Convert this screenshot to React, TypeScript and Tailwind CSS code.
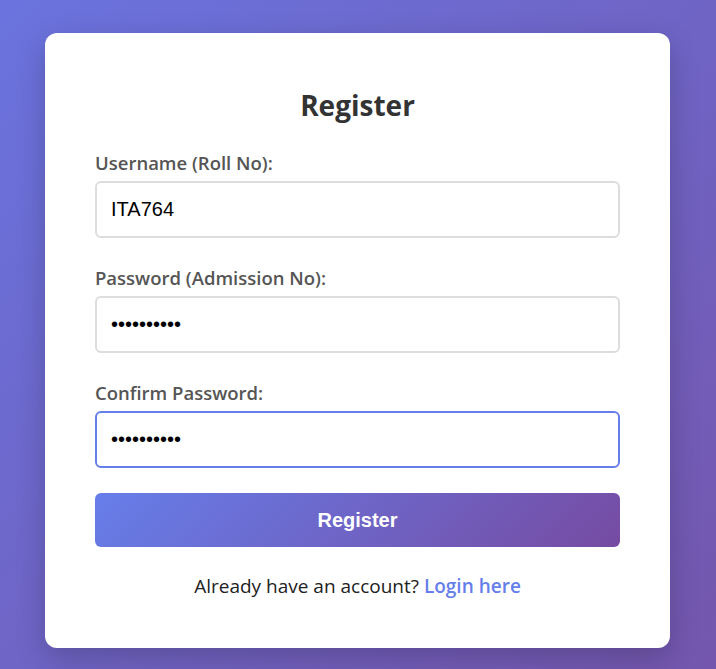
export default function App() {
    const sans = "font-['Open_Sans','Noto_Sans',sans-serif]"
    const arial = "font-['Liberation_Sans',Arial,sans-serif]"

    return <div className={`min-h-[669px] bg-[linear-gradient(135deg,#6a73de_0%,#7456ad_100%)] pt-[33px] pb-[21px] ${sans}`}>
        <div className="w-[625px] ml-[45px] bg-white rounded-[12px] shadow-[0_10px_30px_rgba(0,0,0,0.2)] px-[50px] pt-[50px] pb-[48px]">
            <h2 className="text-center text-[28px] font-bold text-[#333] leading-[44px] mb-[23px]">
                Register
            </h2>

            <form onSubmit={(ev) => ev.preventDefault()}>
                <div className="mb-[27px]">
                    <label className="block text-[18.5px] font-semibold text-[#555] leading-[26px] mb-[5px]">
                        Username (Roll No):
                    </label>
                    <input
                        type="text"
                        defaultValue="ITA764"
                        className={`w-full h-[57px] px-[14px] rounded-[6px] border-2 border-[#ddd] text-[20px] text-black outline-none ${arial}`}
                    />
                </div>

                <div className="mb-[27px]">
                    <label className="block text-[18.5px] font-semibold text-[#555] leading-[26px] mb-[5px]">
                        Password (Admission No):
                    </label>
                    <input
                        type="password"
                        defaultValue="ita764pass"
                        className={`w-full h-[57px] px-[14px] rounded-[6px] border-2 border-[#ddd] text-[20px] text-black outline-none ${arial}`}
                    />
                </div>

                <div className="mb-[25px]">
                    <label className="block text-[18.5px] font-semibold text-[#555] leading-[26px] mb-[5px]">
                        Confirm Password:
                    </label>
                    <input
                        type="password"
                        defaultValue="ita764pass"
                        autoFocus
                        className={`w-full h-[57px] px-[14px] rounded-[6px] border-2 border-[#667eea] text-[20px] text-black outline-none ${arial}`}
                    />
                </div>

                <button
                    type="submit"
                    className={`w-full h-[54px] rounded-[6px] bg-[linear-gradient(135deg,#667eea_0%,#764ba2_100%)] text-white text-[20px] font-bold ${arial}`}
                >
                    Register
                </button>
            </form>

            <p className="text-center text-[19px] text-[#222] mt-[25px] leading-[28px]">
                Already have an account? <a href="#" className="text-[#667eea] font-semibold">Login here</a>
            </p>
        </div>
    </div>
}
